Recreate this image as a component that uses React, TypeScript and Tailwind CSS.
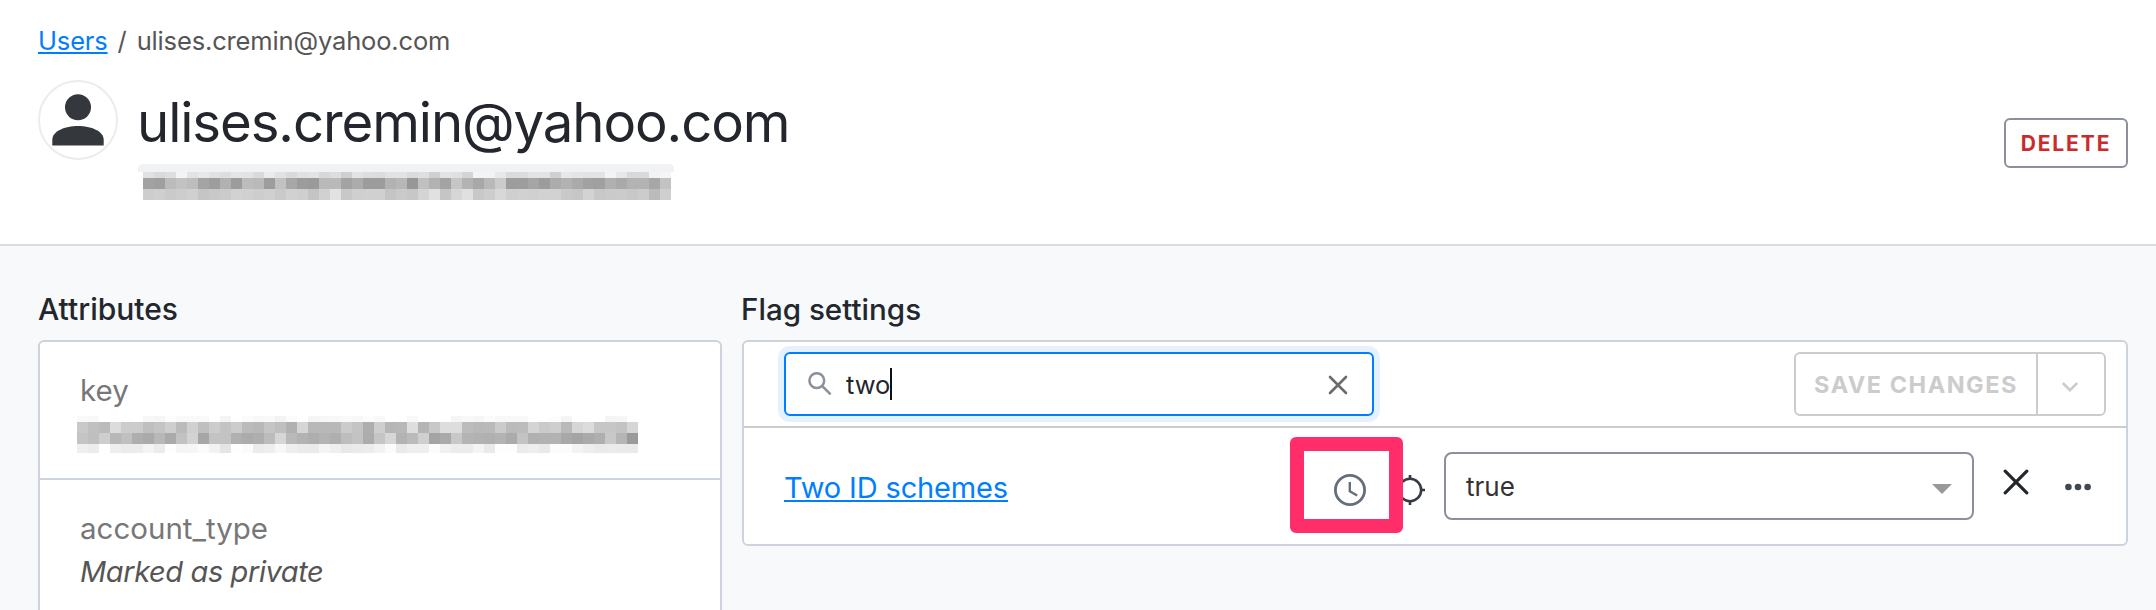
import React from "react";

type MosaicRow = { y: number; h: number; cells: string };

const idRows: MosaicRow[] = [
  { y: 0, h: 6, cells: "e1 da de f4 e3 e8 e2 de e5 e3 da eb e2 da e1 e3 d8 dd cf e3 de dc e2 e3 db df cf e3 e0 d4 f4 f3 e8 db dc e3 e3 d0 e8 e5 e3 e3 f4 e8 d9 da f3 f5" },
  { y: 5.5, h: 11, cells: "a2 9f bb c2 bd a4 9d b1 9c bc ba 9d c2 a7 9c 9a b9 b9 a3 ac 9c 9c b2 b7 97 c0 b2 a3 c6 b3 a8 b9 cb 9d 9d a5 9c ac b2 aa a1 a0 b0 a9 b3 b3 a7 c3" },
  { y: 16.5, h: 11, cells: "cd cf ca cd d0 c5 c8 cb d2 d0 cd d0 ca d1 cf c4 d1 e2 c8 cf d0 d0 c4 ca c7 d4 e1 c5 d6 e0 c8 cd d8 cf d1 d0 d2 d2 c9 c6 d3 c8 ca cb c8 cc bb cf" },
];

const keyRows: MosaicRow[] = [
  { y: 0, h: 6, cells: "f9 f8 ff ff fe ff f7 f6 fc f9 f9 f9 fe f4 ff fb f8 f9 f3 fb ff f5 f7 f8 f9 f8 fc f9 ff fe f8 ff ff ff f5 f8 f6 fb f8 f8 f8 ff fe fd f5 ff ff ff f4 f6 fe" },
  { y: 5.5, h: 11, cells: "c9 c0 bb dc cc cc bf c4 ce bb d0 bf cc c3 cc bb b8 c5 bf b1 d6 b8 b8 b8 cb c4 ae ce b6 b8 de b5 c8 dd dd bc b8 ba cb bb bc d4 ca ce b9 d6 dc c6 c6 c3 d6" },
  { y: 16.5, h: 11, cells: "c4 bf ce b7 c0 ae aa b8 aa c2 d3 a6 c3 c3 b0 ab ae bc d6 b9 b3 ae b3 af bd c3 ac c5 d6 b3 bb cf a4 a9 c8 b4 b2 b0 b3 ab c3 b0 b2 b2 a8 a4 aa af c8 b5 9a" },
  { y: 27.5, h: 9.5, cells: "ef ec ff ee eb ec f4 ec fe f5 f6 fb f2 e5 fe fb ec ee f7 ee eb ea f4 ef e8 ea ec f2 fb ea ee ee fc f0 ec ec f4 ea fe fd eb ee e9 fc fc f3 ee ea eb ea ea" },
];

function Mosaic({ rows, width, height, className }: { rows: MosaicRow[]; width: number; height: number; className?: string }) {
  return (
    <svg width={width} height={height} viewBox={`0 0 ${width} ${height}`} shapeRendering="crispEdges" className={className} aria-hidden="true">
      {rows.map((row) =>
        row.cells.split(" ").map((g, i) => (
          <rect key={`${row.y}-${i}`} x={i * 11} y={row.y} width={11} height={row.h} fill={`#${g}${g}${g}`} />
        )),
      )}
    </svg>
  );
}

function Header() {
  return (
    <header className="h-[246px] border-b-2 border-[#dcdcdc] bg-white pt-[25px] pr-[28px] pl-[38px]">
      <nav className="flex h-8 items-center text-[25.5px] leading-8 tracking-[-0.15px] text-[#555]">
        <a className="text-[#007eff] underline decoration-2 underline-offset-[2px] [text-decoration-skip-ink:none]">Users</a>
        <span className="w-[29px] text-center">/</span>
        <span>ulises.cremin@yahoo.com</span>
      </nav>
      <div className="mt-[23px] flex items-start">
        <div className="h-20 w-20 shrink-0 rounded-full border-2 border-[#ececec]">
          <svg width="76" height="76" viewBox="0 0 76 76" fill="#34383d">
            <circle cx="38" cy="25.3" r="13" />
            <path d="M12.3 63.5v-5.5C12.3 49 25 44 38 44s25.7 5 25.7 14v5.5z" />
          </svg>
        </div>
        <div className="ml-5 pt-[11px]">
          <h1 className="-ml-px h-16 text-[54.5px] leading-[63px] tracking-[-1.1px] whitespace-nowrap text-[#23272d]">ulises.cremin@yahoo.com</h1>
          <div className="mt-[9px] w-[536px] rounded-t-[5px] bg-[linear-gradient(#f1f2f4_8px,transparent_8px)] pt-2 pl-[5px]">
            <Mosaic rows={idRows} width={528} height={28} />
          </div>
        </div>
        <button className="mt-[38px] ml-auto h-[50px] w-[124px] rounded-[6px] border-2 border-[#8b909c] text-[21px] leading-[47px] font-bold tracking-[1.9px] text-[#cb2b2b]">
          DELETE
        </button>
      </div>
    </header>
  );
}

function Attributes() {
  return (
    <section className="w-[684px] shrink-0">
      <h2 className="mb-[13px] text-[30px] leading-9 font-medium text-[#23272d]">Attributes</h2>
      <div className="h-[300px] rounded-[6px] border-2 border-[#cdd3dc] bg-white">
        <div className="h-[138px] border-b-2 border-[#cdd3dc] pt-[30px] pl-10">
          <div className="text-[29.5px] leading-9 text-[#777]">key</div>
          <Mosaic rows={keyRows} width={561} height={37} className="mt-[8px] -ml-[3px]" />
        </div>
        <div className="pt-[30px] pl-10">
          <div className="text-[29.5px] leading-9 text-[#777]">account_type</div>
          <div className="mt-[8px] text-[29px] leading-9 tracking-[-0.4px] text-[#555] italic">Marked as private</div>
        </div>
      </div>
    </section>
  );
}

function SearchRow() {
  return (
    <div className="flex h-[86px] items-center justify-between border-b-2 border-[#ccc] pr-5 pl-10">
      <div className="flex h-16 w-[590px] items-center rounded-[6px] border-2 border-[#007eff] bg-white pr-[24px] pl-[22px] shadow-[0_0_0_6px_#e6f1ff]">
        <svg width="24" height="24" viewBox="0 0 24 24" fill="none" stroke="#8b909c" strokeWidth="2.5" strokeLinecap="butt">
          <circle cx="8.8" cy="8.6" r="7.4" />
          <path d="M14.2 14l8.4 8.4" />
        </svg>
        <span className="ml-[14px] pt-px text-[25.5px] leading-8 text-[#23272d]">two</span>
        <span className="h-8 w-[2px] bg-[#111]" />
        <svg className="ml-auto mt-[2px]" width="20" height="20" viewBox="0 0 20 20" fill="none" stroke="#6b6b6b" strokeWidth="2.6" strokeLinecap="round">
          <path d="M2 2l16 16M18 2L2 18" />
        </svg>
      </div>
      <div className="flex h-16 w-[312px] rounded-[6px] border-2 border-[#ccc] text-[#ccc]">
        <button className="w-[242px] border-r-2 border-[#ccc] text-[23.5px] leading-[59px] font-bold tracking-[1.5px] whitespace-nowrap">
          SAVE CHANGES
        </button>
        <button className="flex flex-1 items-center justify-center pt-[5px] pr-[2px]">
          <svg width="18" height="12" viewBox="0 0 18 12" fill="none" stroke="currentColor" strokeWidth="2.6">
            <path d="M1.8 2L9 9.2 16.2 2" />
          </svg>
        </button>
      </div>
    </div>
  );
}

function FlagRow() {
  return (
    <div className="flex h-[116px] items-center pr-[35px] pl-10">
      <a className="pt-[3px] text-[29px] leading-9 tracking-[-0.15px] text-[#007eff] underline decoration-2 underline-offset-[2px] [text-decoration-skip-ink:none]">Two ID schemes</a>
      <div className="relative mt-2 ml-auto h-8 w-8">
        <svg width="32" height="32" viewBox="0 0 32 32" fill="none" stroke="#646f7c" strokeWidth="2.8">
          <circle cx="16" cy="16" r="14.6" />
          <path d="M15.8 8v9.3l7.4 4.2" strokeWidth="2.4" />
        </svg>
        <div className="absolute -top-[37px] -left-[44px] z-10 h-24 w-[113px] rounded-[6px] border-14 border-[#ff2e6b]" />
      </div>
      <svg className="mt-2 ml-7" width="32" height="32" viewBox="0 0 32 32" fill="none" stroke="#363b43" strokeWidth="2.6">
        <circle cx="16" cy="16" r="11.2" />
        <path d="M16 1v5M16 26v5M1 16h5M26 16h5" />
      </svg>
      <div className="ml-[18px] flex h-[68px] w-[530px] items-center justify-between rounded-[8px] border-2 border-[#8b909c] bg-white pr-5 pl-5 text-[26px] text-[#333]">
        <span className="pt-px">true</span>
        <svg width="20" height="10" viewBox="0 0 20 10" fill="#999" className="mt-[6px]">
          <path d="M0 0h20L10 10z" />
        </svg>
      </div>
      <svg className="mb-2 ml-[29px]" width="26" height="26" viewBox="0 0 26 26" fill="none" stroke="#23272d" strokeWidth="3.2" strokeLinecap="round">
        <path d="M2.2 2.2l21.6 21.6M23.8 2.2L2.2 23.8" />
      </svg>
      <svg className="mt-[2px] ml-9" width="26" height="8" viewBox="0 0 26 8" fill="#414852">
        <circle cx="3.4" cy="4" r="3.3" />
        <circle cx="13" cy="4" r="3.3" />
        <circle cx="22.6" cy="4" r="3.3" />
      </svg>
    </div>
  );
}

export default function App() {
  return (
    <div className="h-[610px] w-[2156px] overflow-hidden bg-[#f7f9fb] font-['Inter',sans-serif]">
      <Header />
      <main className="flex items-start gap-5 pt-[45px] pr-[28px] pl-[38px]">
        <Attributes />
        <section className="min-w-0 flex-1">
          <h2 className="mb-[13px] -ml-px text-[29.6px] leading-9 font-medium text-[#23272d]">Flag settings</h2>
          <div className="rounded-[6px] border-2 border-[#cdd3dc] bg-white">
            <SearchRow />
            <FlagRow />
          </div>
        </section>
      </main>
    </div>
  );
}
